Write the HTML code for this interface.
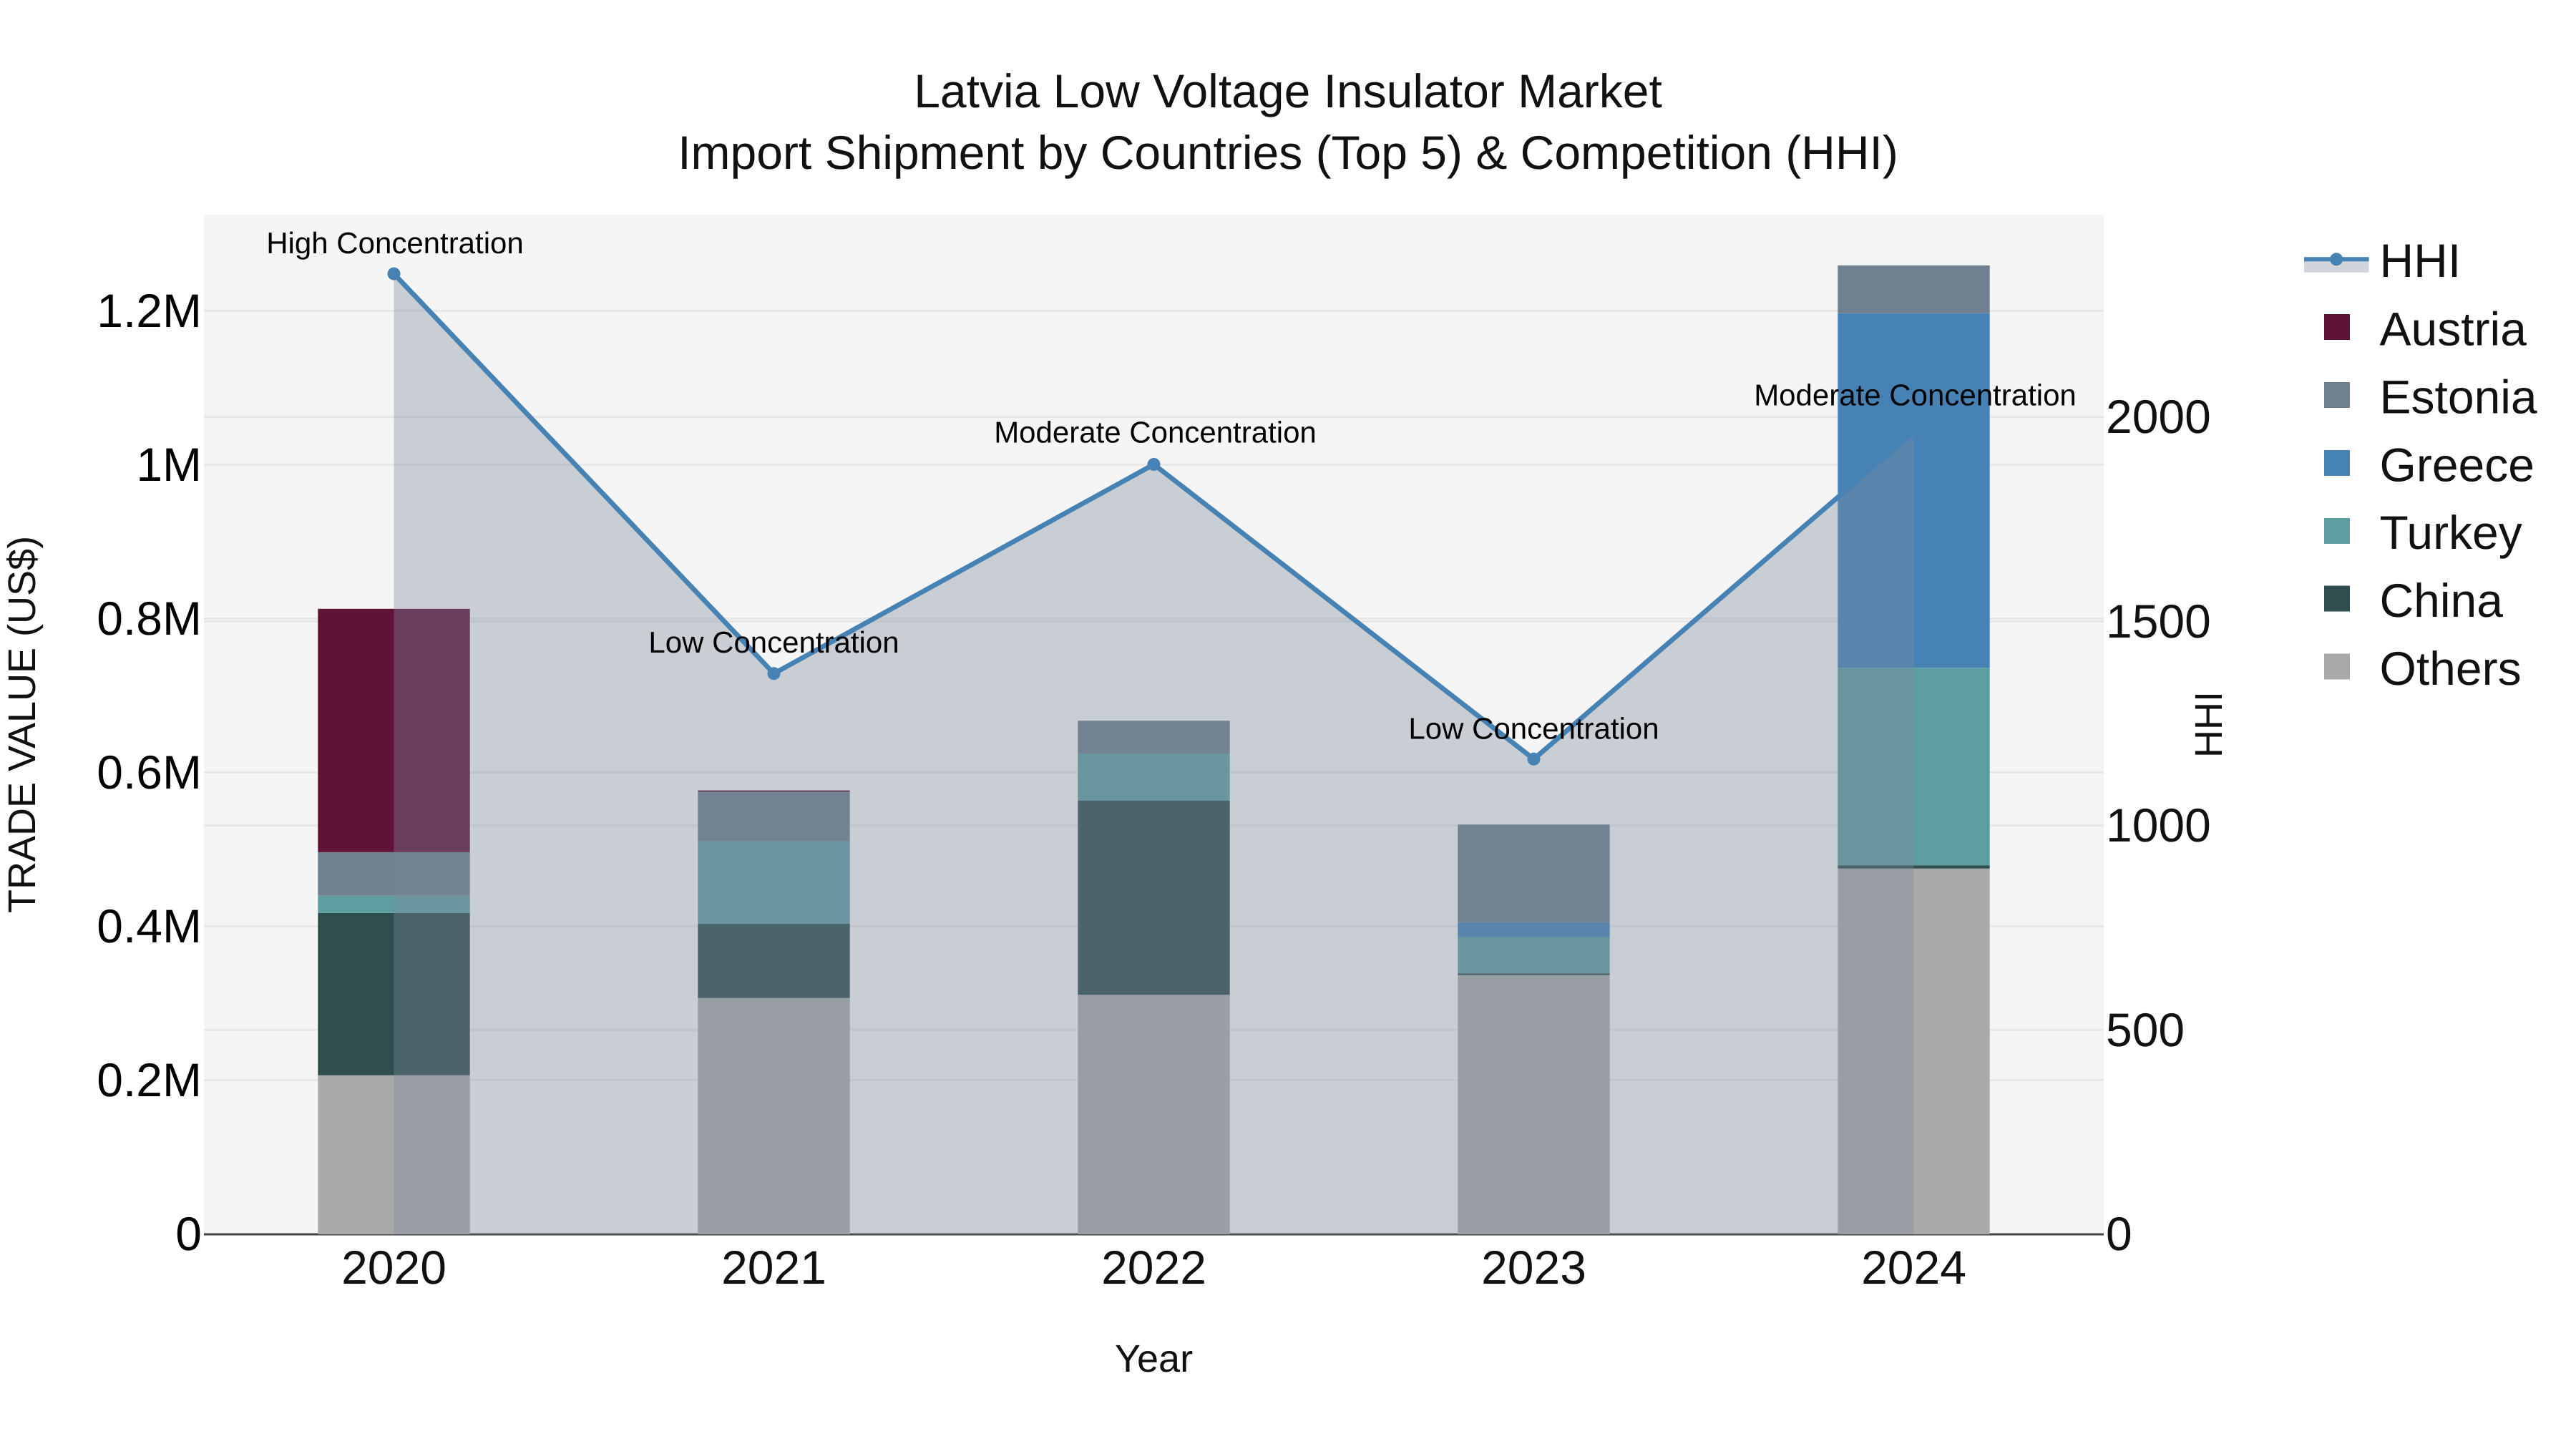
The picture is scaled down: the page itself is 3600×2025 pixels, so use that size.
<!DOCTYPE html>
<html lang="en">
<head>
<meta charset="utf-8">
<title>Latvia Low Voltage Insulator Market</title>
<style>
html,body{margin:0;padding:0;background:#fff;width:3600px;height:2025px;overflow:hidden}
svg{display:block;font-family:"Liberation Sans",Arial,sans-serif;text-rendering:geometricPrecision}
.grid line{stroke:#e7e7e7;stroke-width:3}
.tl text{font-size:66px;fill:#000;text-anchor:end}
.tr text{font-size:66px;fill:#111}
.tx text{font-size:66px;fill:#111;text-anchor:middle}
.lab text{font-size:42px;fill:#000;text-anchor:middle}
.leg text{font-size:66px;fill:#111}
</style>
</head>
<body>
<svg xmlns="http://www.w3.org/2000/svg" width="3600" height="2025" viewBox="0 0 3600 2025">
<rect width="3600" height="2025" fill="#fff"/>
<rect x="285" y="300" width="2655" height="1425" fill="#f5f5f5"/>
<g class="grid">
<line x1="285" x2="2940" y1="434.3" y2="434.3"/>
<line x1="285" x2="2940" y1="582.7" y2="582.7"/>
<line x1="285" x2="2940" y1="649.3" y2="649.3"/>
<line x1="285" x2="2940" y1="864.5" y2="864.5"/>
<line x1="285" x2="2940" y1="868.5" y2="868.5"/>
<line x1="285" x2="2940" y1="1079.5" y2="1079.5"/>
<line x1="285" x2="2940" y1="1153.8" y2="1153.8"/>
<line x1="285" x2="2940" y1="1294.5" y2="1294.5"/>
<line x1="285" x2="2940" y1="1439.4" y2="1439.4"/>
<line x1="285" x2="2940" y1="1509.5" y2="1509.5"/>
</g>
<line x1="285" x2="2940" y1="1725" y2="1725" stroke="#444" stroke-width="3"/>

<!-- 2020 -->
<rect x="444.3" y="1502.7" width="212.4" height="222.3" fill="#a9a9a9"/>
<rect x="444.3" y="1275.9" width="212.4" height="226.8" fill="#2f4f4f"/>
<rect x="444.3" y="1251.7" width="212.4" height="24.2" fill="#5f9ea0"/>
<rect x="444.3" y="1190.9" width="212.4" height="60.8" fill="#708090"/>
<rect x="444.3" y="850.8" width="212.4" height="340.1" fill="#5f1337"/>
<!-- 2021 -->
<rect x="975.3" y="1394.8" width="212.4" height="330.2" fill="#a9a9a9"/>
<rect x="975.3" y="1290.9" width="212.4" height="103.9" fill="#2f4f4f"/>
<rect x="975.3" y="1175.8" width="212.4" height="115.1" fill="#5f9ea0"/>
<rect x="975.3" y="1106.5" width="212.4" height="69.3" fill="#708090"/>
<rect x="975.3" y="1104.6" width="212.4" height="1.9" fill="#5f1337"/>
<!-- 2022 -->
<rect x="1506.3" y="1390.2" width="212.4" height="334.8" fill="#a9a9a9"/>
<rect x="1506.3" y="1119" width="212.4" height="271.2" fill="#2f4f4f"/>
<rect x="1506.3" y="1053" width="212.4" height="66" fill="#5f9ea0"/>
<rect x="1506.3" y="1007.2" width="212.4" height="45.8" fill="#708090"/>
<!-- 2023 -->
<rect x="2037.3" y="1362.8" width="212.4" height="362.2" fill="#a9a9a9"/>
<rect x="2037.3" y="1360.2" width="212.4" height="2.6" fill="#2f4f4f"/>
<rect x="2037.3" y="1309.8" width="212.4" height="50.4" fill="#5f9ea0"/>
<rect x="2037.3" y="1288.9" width="212.4" height="20.9" fill="#4682b4"/>
<rect x="2037.3" y="1152.3" width="212.4" height="136.6" fill="#708090"/>
<!-- 2024 -->
<rect x="2568.3" y="1213.8" width="212.4" height="511.2" fill="#a9a9a9"/>
<rect x="2568.3" y="1209.2" width="212.4" height="4.6" fill="#2f4f4f"/>
<rect x="2568.3" y="933.2" width="212.4" height="276" fill="#5f9ea0"/>
<rect x="2568.3" y="437.8" width="212.4" height="495.4" fill="#4682b4"/>
<rect x="2568.3" y="370.9" width="212.4" height="66.9" fill="#708090"/>

<!-- HHI area + line -->
<polygon points="550.5,382.6 1081.5,941.3 1612.5,649 2143.5,1060.8 2674.5,603.5 2674.5,1725 550.5,1725" fill="rgb(125,135,155)" fill-opacity="0.36"/>
<polyline points="550.5,382.6 1081.5,941.3 1612.5,649 2143.5,1060.8 2674.5,603.5" fill="none" stroke="#4682b4" stroke-width="6.8" stroke-linejoin="round"/>
<g fill="#4682b4">
<circle cx="550.5" cy="382.6" r="9"/>
<circle cx="1081.5" cy="941.3" r="9"/>
<circle cx="1612.5" cy="649" r="9"/>
<circle cx="2143.5" cy="1060.8" r="9"/>
<circle cx="2674.5" cy="603.5" r="9"/>
</g>
<g class="lab">
<text x="552" y="354">High Concentration</text>
<text x="1081.5" y="912">Low Concentration</text>
<text x="1614.5" y="618.5">Moderate Concentration</text>
<text x="2143.5" y="1032.5">Low Concentration</text>
<text x="2676.5" y="566.5">Moderate Concentration</text>
</g>

<!-- title -->
<text x="1800" y="150" font-size="66" fill="#111" text-anchor="middle">Latvia Low Voltage Insulator Market</text>
<text x="1800" y="236" font-size="66" fill="#111" text-anchor="middle">Import Shipment by Countries (Top 5) &amp; Competition (HHI)</text>

<!-- left ticks -->
<g class="tl">
<text x="282" y="457">1.2M</text>
<text x="282" y="672">1M</text>
<text x="282" y="887">0.8M</text>
<text x="282" y="1102">0.6M</text>
<text x="282" y="1317">0.4M</text>
<text x="282" y="1532">0.2M</text>
<text x="282" y="1747">0</text>
</g>
<!-- right ticks -->
<g class="tr">
<text x="2943" y="605">2000</text>
<text x="2943" y="891">1500</text>
<text x="2943" y="1176">1000</text>
<text x="2943" y="1462">500</text>
<text x="2943" y="1747">0</text>
</g>
<!-- x ticks -->
<g class="tx">
<text x="550.5" y="1794">2020</text>
<text x="1081.5" y="1794">2021</text>
<text x="1612.5" y="1794">2022</text>
<text x="2143.5" y="1794">2023</text>
<text x="2674.5" y="1794">2024</text>
</g>
<!-- axis titles -->
<text x="1612.5" y="1917" font-size="54" fill="#111" text-anchor="middle">Year</text>
<text transform="translate(49,1012.5) rotate(-90)" font-size="54" fill="#111" text-anchor="middle">TRADE VALUE (US$)</text>
<text transform="translate(3105,1012.5) rotate(-90)" font-size="54" fill="#111" text-anchor="middle">HHI</text>

<!-- legend -->
<rect x="3220" y="362" width="90.5" height="18.7" fill="rgb(125,135,155)" fill-opacity="0.36"/>
<line x1="3220" x2="3310.5" y1="362.3" y2="362.3" stroke="#4682b4" stroke-width="6"/>
<circle cx="3265.2" cy="362.3" r="9" fill="#4682b4"/>
<rect x="3248" y="439" width="36" height="36" fill="#5f1337"/>
<rect x="3248" y="534" width="36" height="36" fill="#708090"/>
<rect x="3248" y="629" width="36" height="36" fill="#4682b4"/>
<rect x="3248" y="724" width="36" height="36" fill="#5f9ea0"/>
<rect x="3248" y="818.5" width="36" height="36" fill="#2f4f4f"/>
<rect x="3248" y="913.5" width="36" height="36" fill="#a9a9a9"/>
<g class="leg">
<text x="3325.5" y="387">HHI</text>
<text x="3325.5" y="482.5">Austria</text>
<text x="3325.5" y="577.5">Estonia</text>
<text x="3325.5" y="672.5">Greece</text>
<text x="3325.5" y="767">Turkey</text>
<text x="3325.5" y="862">China</text>
<text x="3325.5" y="957">Others</text>
</g>
</svg>
</body>
</html>
